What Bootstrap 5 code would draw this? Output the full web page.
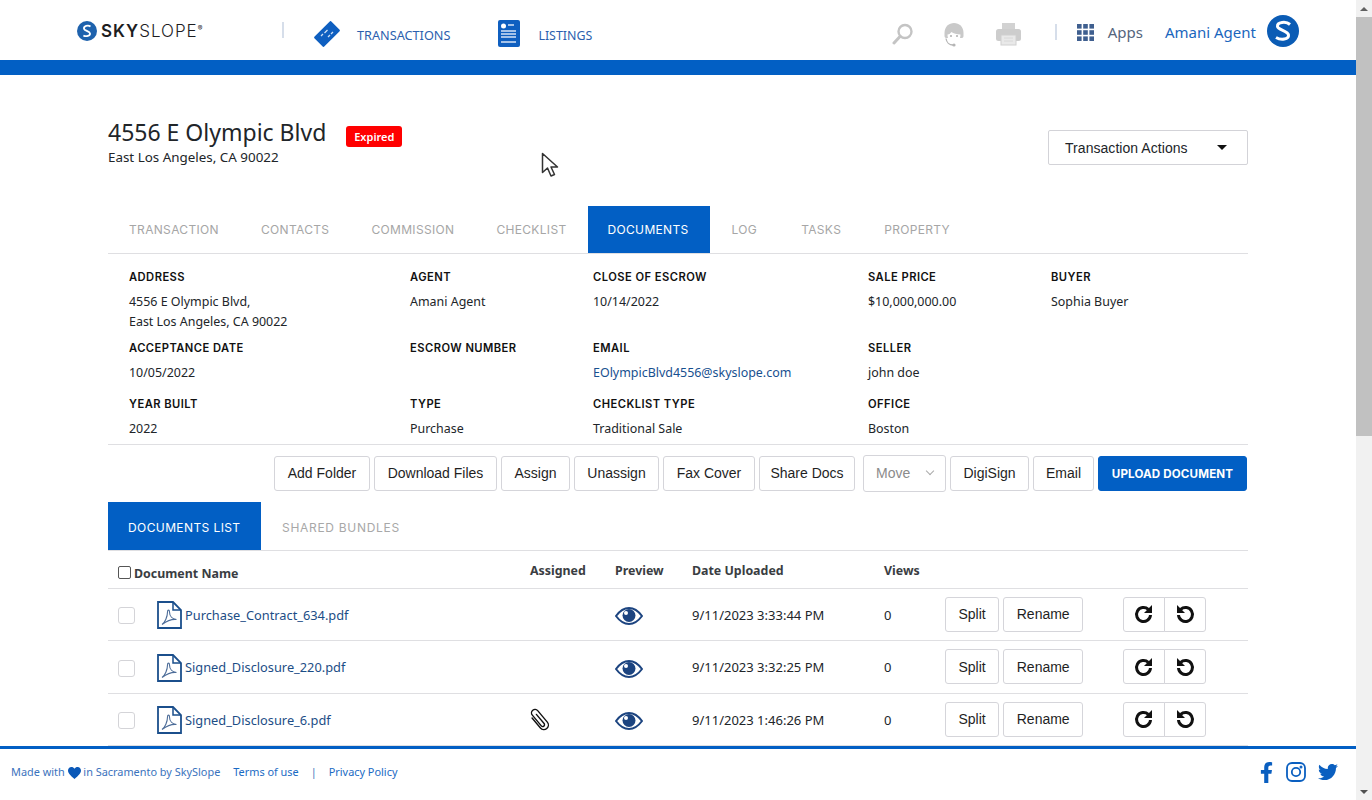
<!doctype html>
<html lang="en"><head><meta charset="utf-8"><title>SkySlope</title>
<link href="https://cdn.jsdelivr.net/npm/bootstrap@5.3.0/dist/css/bootstrap.min.css" rel="stylesheet">
<style>
:root{--sky:#025fc4;--ink:#212529;--line:#dfdfe2;}
html,body{height:100%;overflow:hidden;}
body{font-family:"Noto Sans","Open Sans",sans-serif;font-size:13px;color:var(--ink);background:#fff;}
.app{height:800px;}
.page{width:1356px;height:800px;}
.sb{width:16px;background:#f1f1f1;}
.sb-btn{height:17px;}
.sb-thumb{height:419px;background:#c1c1c1;}
.sb-arrow{width:0;height:0;border-left:4px solid transparent;border-right:4px solid transparent;}
.sb-arrow.up{border-bottom:4px solid #606060;}
.sb-arrow.down{border-top:4px solid #505050;}
.top{height:60px;padding-left:77px;padding-right:57px;}
.band{height:15px;background:var(--sky);}
.logo{width:205px;padding-top:1px;}
.logo-t{font-family:"Inter",sans-serif;font-size:17px;letter-spacing:1px;line-height:1;color:#1d1d1f;padding-top:2px;}
.logo-t b{font-weight:600;}.logo-t span{font-weight:300;}
.logo-t sup{font-size:7px;top:-.9em;letter-spacing:0;}
.vsep{width:2px;height:16px;background:#d6deea;}
.nav-main{font-size:12.7px;color:#2c5fae;text-decoration:none;padding-top:7px;}
.nav-main span{padding-top:5px;}
.nav-tr{margin-left:30px;}
.nav-tr svg{margin-right:17px;}
.nav-li{margin-left:46px;}
.nav-li svg{margin-right:17px;}
.nav-li span{font-size:12.4px;}
.tools{padding-top:4px;}
.ms-head{margin-left:29px;}
.ms-print{margin-left:31px;}
.ms-sep{margin-left:34px;}
.ms-grid{margin-left:20px;}
.apps{margin-left:14px;font-size:15px;color:#55657d;}
.who{margin-left:22px;font-size:15px;color:#1a66bd;}
.ava{margin-left:11px;margin-top:-3px;}
.pg{width:1140px;}
.head{height:131px;padding-top:43px;}
.title{font-size:23px;font-weight:400;line-height:28px;margin:0;}
.sub{font-size:13.4px;line-height:21px;}
.badge-exp{background:#f00;color:#fff;font-size:11px;font-weight:600;width:56px;height:21px;border-radius:3px;margin-left:20px;margin-top:8px;padding-top:1px;}
.btn-act{width:200px;height:35px;border:1px solid #d3d3d8;border-radius:2px;font:14px "Liberation Sans",sans-serif;letter-spacing:.05px;background:#fff;color:var(--ink);padding:0 20px 0 16px;margin-top:12px;}
.caret{width:0;height:0;border-left:5px solid transparent;border-right:5px solid transparent;border-top:5px solid #111;}
.tabs{height:48px;border-bottom:1px solid var(--line);font-family:"Inter",sans-serif;font-size:12px;}
.tabs a{display:flex;align-items:center;padding:0 21px;color:#a6a6a6;text-decoration:none;letter-spacing:.33px;white-space:nowrap;}
.tabs a.on{background:var(--sky);color:#fff;padding:0 21px 0 20px;}
.tabs a.t-log{padding:0 23px 0 22px;}
.tabs a.t-tasks{padding-right:22px;}
.info{display:grid;grid-template-columns:281px 183px 275px 183px 1fr;padding:13px 0 0 21px;height:191px;border-bottom:1px solid var(--line);align-content:start;font-size:12.45px;}
.lab{font-family:"Inter",sans-serif;font-size:11.2px;font-weight:600;color:#111;height:25px;line-height:20px;letter-spacing:.45px;white-space:nowrap;}
.val{line-height:20px;white-space:nowrap;}
.c1{height:46px}.c2{height:31px}.c3{height:31px}
.info a{color:#17508f;text-decoration:none;}
.bar{height:57px;padding-top:11px;padding-right:1px;}
.b{height:35px;background:#fff;border:1px solid #d5d5da;border-radius:3px;font:14px/1 "Liberation Sans",sans-serif;color:#1f1f1f;padding:0 0 2px;white-space:nowrap;}
.w-add{width:96px}.w-dl{width:123px}.w-as{width:69px}.w-un{width:85px}.w-fax{width:92px}.w-sh{width:96px}.w-dg{width:79px}.w-em{width:61px}
.b.mv{color:#8b8b8b;width:83px;padding:0 12px 2px;margin-left:4px;margin-top:-1px;height:37px;}
.b.up{background:var(--sky);border-color:var(--sky);color:#fff;font:700 11.6px "Inter",sans-serif;letter-spacing:.15px;width:149px;padding:0;}
.chev{width:6px;height:6px;border-right:1px solid #aaa;border-bottom:1px solid #aaa;transform:rotate(45deg);margin-top:-3px;}
.subtabs{height:49px;border-bottom:1px solid var(--line);font-family:"Inter",sans-serif;font-size:12px;}
.subtabs a{display:flex;align-items:center;padding:3px 21px 0;color:#a8a8a8;text-decoration:none;letter-spacing:.7px;}
.subtabs a.on{background:var(--sky);color:#fff;padding:3px 0 0 20px;width:153px;letter-spacing:.4px;}
.tbl{table-layout:fixed;width:1140px;margin:0;--bs-table-border-color:#dfdfe2;}
.tbl th,.tbl td{padding:0;vertical-align:middle;font-weight:400;}
.tbl th{font-weight:700;font-size:12.4px;color:#3a3d42;height:37px;padding-top:5px;}
.tbl th.first{padding-top:11px;}
.tbl td{height:52.6px;font-size:13px;padding-top:2px;}
.tbl td.act{padding-top:0;}
.ck-h.form-check-input{width:13px;height:13px;margin:0 3px 0 10px;border:1px solid #555;border-radius:2px;vertical-align:-1px;}
.ck.form-check-input{width:17px;height:17px;margin:1px 0 0 10px;border:1px solid #d4d4d8;border-radius:3px;}
.fname{color:#1c4d86;text-decoration:none;font-size:12.8px;}
.pdf{margin-left:22px;margin-right:3px;flex:none;}
.b.sm{height:35px;font-size:14px;padding:0 12.5px;}
.rot{width:42px;height:35px;padding:0;background:#fff;border:1px solid #d5d5da;}
.rot:first-child{border-radius:3px 0 0 3px;}
.rot:last-child{border-radius:0 3px 3px 0;margin-left:-1px;}
.clip{display:block;margin-left:-3px;}
.foot{left:0;right:0;bottom:0;height:54px;background:#fff;border-top:3px solid var(--sky);padding:0 18px 5px 11px;font-size:10.9px;color:#3b73bd;}
.foot a{color:#1a6ac4;text-decoration:none;}
.ft-a{margin-left:13px;}
.ft-s{margin:0 12px;}
.cursor{left:541px;top:152px;}
</style></head>
<body>
<div class="app d-flex">
<div class="page position-relative overflow-hidden flex-shrink-0">
  <header class="top d-flex align-items-center">
    <div class="logo d-flex align-items-center gap-1">
      <svg width="20" height="20" viewBox="0 0 20 20"><circle cx="10" cy="10" r="10" fill="#1e62ad"/><path d="M13.500 5.500C11 3.800 6.500 5 7 7.800c.4 2 5.600 2.200 6 4.600.4 2.600-4 3.600-6.600 2" fill="none" stroke="#fff" stroke-width="1.800"/></svg>
      <div class="logo-t"><b>SKY</b><span>SLOPE</span><sup>®</sup></div>
    </div>
    <div class="vsep"></div>
    <a class="nav-main nav-tr d-flex align-items-center" href="#">
      <svg width="26" height="26" viewBox="0 0 26 26"><rect x="1" y="6" width="24" height="14" rx="1.500" fill="#0f5fc0" transform="rotate(-45 13 13)"/><path d="M7 15l2-2M10.500 12l3-3M14 16l2-2M17 13l2-2" stroke="#cfe0f5" stroke-width="1.300"/></svg>
      <span>TRANSACTIONS</span>
    </a>
    <a class="nav-main nav-li d-flex align-items-center" href="#">
      <svg width="25" height="28" viewBox="0 0 25 28"><rect x="2" y="0" width="22" height="27" rx="2" fill="#0f5fc0"/><circle cx="7.500" cy="6" r="2.500" fill="#fff"/><path d="M12 5h6M5 11h15M5 14h15M5 17h15M5 22h15" stroke="#d6e4f6" stroke-width="1.400"/></svg>
      <span>LISTINGS</span>
    </a>
    <div class="tools ms-auto d-flex align-items-center">
      <svg width="22" height="24" viewBox="0 0 22 24" class="mt-1"><circle cx="13" cy="9.500" r="6.500" fill="none" stroke="#c4c4c4" stroke-width="2.400"/><path d="M8 14.500l-6 6.500" stroke="#c4c4c4" stroke-width="3" stroke-linecap="round"/></svg>
      <svg class="ms-head mt-1" width="22" height="25" viewBox="0 0 22 25"><path d="M1.500 11C1.500 4.500 6 1 11 1s9.500 3.500 9.500 10v3c0 1.500-1 2-2 2H3.500c-1 0-2-.5-2-2z" fill="#c9c9c9"/><path d="M4.500 12.500c2 0 3-1.500 4-2.500 2 1.500 5 2.500 9 2.500 0 4.500-2.500 8-6.500 8s-6.500-3.500-6.500-8z" fill="#fff"/><circle cx="8" cy="14" r="1.100" fill="#b5b5b5"/><circle cx="14" cy="14" r="1.100" fill="#b5b5b5"/><path d="M3 16.500c.5 4 3.500 6.500 7 6.500" stroke="#b5b5b5" fill="none" stroke-width="1.300"/><circle cx="11" cy="23" r="1.600" fill="#b5b5b5"/></svg>
      <svg class="ms-print mt-1" width="25" height="24" viewBox="0 0 25 24"><path d="M6 1h13v6H6z" fill="#d2d2d2"/><rect x="0" y="7" width="25" height="12" rx="2.500" fill="#cdcdcd"/><rect x="5" y="13" width="15" height="10" fill="#e9e9e9" stroke="#d0d0d0"/><path d="M8 16h9M8 19h9" stroke="#d8d8d8"/></svg>
      <div class="vsep ms-sep"></div>
      <svg class="ms-grid" width="17" height="17" viewBox="0 0 17 17"><g fill="#3f5f8f"><rect width="4.600" height="4.600"/><rect x="6.200" width="4.600" height="4.600"/><rect x="12.400" width="4.600" height="4.600"/><rect y="6.200" width="4.600" height="4.600"/><rect x="6.200" y="6.200" width="4.600" height="4.600"/><rect x="12.400" y="6.200" width="4.600" height="4.600"/><rect y="12.400" width="4.600" height="4.600"/><rect x="6.200" y="12.400" width="4.600" height="4.600"/><rect x="12.400" y="12.400" width="4.600" height="4.600"/></g></svg>
      <span class="apps">Apps</span>
      <span class="who">Amani Agent</span>
      <svg class="ava" width="32" height="32" viewBox="0 0 32 32"><circle cx="16" cy="16" r="16" fill="#0b5cb5"/><path d="M23 9.500C19 6 10 7 10.500 11.500c.4 3.500 10.500 4.500 11 8.500.5 4.500-7.500 5.500-12.500 2.500" fill="none" stroke="#fff" stroke-width="3"/></svg>
    </div>
  </header>
  <div class="band"></div>
  <main class="pg mx-auto">
    <div class="head d-flex justify-content-between align-items-start">
      <div>
        <div class="d-flex align-items-start">
          <h1 class="title">4556 E Olympic Blvd</h1>
          <span class="badge-exp d-inline-flex align-items-center justify-content-center">Expired</span>
        </div>
        <div class="sub">East Los Angeles, CA 90022</div>
      </div>
      <button class="btn-act d-flex align-items-center justify-content-between"><span>Transaction Actions</span><i class="caret"></i></button>
    </div>
    <nav class="tabs d-flex">
      <a href="#">TRANSACTION</a><a href="#">CONTACTS</a><a href="#">COMMISSION</a><a href="#">CHECKLIST</a><a href="#" class="on">DOCUMENTS</a><a href="#" class="t-log">LOG</a><a href="#" class="t-tasks">TASKS</a><a href="#">PROPERTY</a>
    </nav>
    <section class="info">
      <div class="lab">ADDRESS</div><div class="lab">AGENT</div><div class="lab">CLOSE OF ESCROW</div><div class="lab">SALE PRICE</div><div class="lab">BUYER</div>
      <div class="val c1">4556 E Olympic Blvd,<br>East Los Angeles, CA 90022</div><div class="val c1">Amani Agent</div><div class="val c1">10/14/2022</div><div class="val c1">$10,000,000.00</div><div class="val c1">Sophia Buyer</div>
      <div class="lab">ACCEPTANCE DATE</div><div class="lab">ESCROW NUMBER</div><div class="lab">EMAIL</div><div class="lab">SELLER</div><div class="lab"></div>
      <div class="val c2">10/05/2022</div><div class="val c2"></div><div class="val c2"><a href="#">EOlympicBlvd4556@skyslope.com</a></div><div class="val c2">john doe</div><div class="val c2"></div>
      <div class="lab">YEAR BUILT</div><div class="lab">TYPE</div><div class="lab">CHECKLIST TYPE</div><div class="lab">OFFICE</div><div class="lab"></div>
      <div class="val">2022</div><div class="val">Purchase</div><div class="val">Traditional Sale</div><div class="val">Boston</div><div class="val"></div>
    </section>
    <div class="bar d-flex justify-content-end align-items-start gap-1">
      <button class="b w-add">Add Folder</button><button class="b w-dl">Download Files</button><button class="b w-as">Assign</button><button class="b w-un">Unassign</button><button class="b w-fax">Fax Cover</button><button class="b w-sh">Share Docs</button>
      <button class="b mv d-flex align-items-center justify-content-between"><span>Move</span><i class="chev"></i></button>
      <button class="b w-dg">DigiSign</button><button class="b w-em">Email</button><button class="b up">UPLOAD DOCUMENT</button>
    </div>
    <nav class="subtabs d-flex"><a href="#" class="on">DOCUMENTS LIST</a><a href="#">SHARED BUNDLES</a></nav>
    <table class="table tbl">
      <colgroup><col style="width:422px"><col style="width:85px"><col style="width:77px"><col style="width:192px"><col style="width:61px"><col style="width:178px"><col></colgroup>
      <thead><tr><th class="first"><input class="form-check-input ck-h" type="checkbox" aria-label="All">Document Name</th><th>Assigned</th><th>Preview</th><th>Date Uploaded</th><th>Views</th><th></th><th></th></tr></thead>
      <tbody id="rows"></tbody>
    </table>
  </main>
  <svg class="cursor position-absolute" width="18" height="26" viewBox="0 0 18 26"><path d="M1.500 1.500v19l5-4.500 3.500 8 3.500-1.500-3.500-7.500h6.500z" fill="#fff" stroke="#333" stroke-width="1.500" stroke-linejoin="round"/></svg>
  <footer class="foot position-absolute d-flex align-items-center justify-content-between">
    <div class="d-flex align-items-center">
      <span>Made with <svg width="13" height="12" viewBox="0 0 24 22"><path d="M12 22C5 16 0 12 0 6.500 0 3 2.800 0 6.300 0 8.600 0 10.800 1.200 12 3.200 13.200 1.200 15.400 0 17.700 0 21.200 0 24 3 24 6.500 24 12 19 16 12 22z" fill="#0a58b8"/></svg> in Sacramento by SkySlope</span>
      <a class="ft-a" href="#">Terms of use</a><span class="ft-s">|</span><a href="#">Privacy Policy</a>
    </div>
    <div class="d-flex align-items-center" style="gap:12px">
      <svg width="15" height="21" viewBox="0 0 320 512"><path fill="#0a5fc0" d="M279.140 288l14.220-92.660h-88.910v-60.130c0-25.350 12.420-50.060 52.240-50.060h40.420V6.260S260.430 0 225.360 0c-73.220 0-121.080 44.380-121.080 124.720v70.620H22.890V288h81.390v224h100.170V288z"/></svg>
      <svg width="20" height="20" viewBox="0 0 20 20" fill="none" stroke="#0a5fc0" stroke-width="1.800"><rect x="1" y="1" width="18" height="18" rx="5"/><circle cx="10" cy="10" r="4.200"/><circle cx="15" cy="5" r=".6" fill="#0a5fc0"/></svg>
      <svg width="20" height="20" viewBox="0 0 512 512"><path fill="#0a5fc0" d="M459.370 151.716c.325 4.548.325 9.097.325 13.645 0 138.720-105.583 298.558-298.558 298.558-59.452 0-114.680-17.219-161.137-47.106 8.447.974 16.568 1.299 25.340 1.299 49.055 0 94.213-16.568 130.274-44.832-46.132-.975-84.792-31.188-98.112-72.772 6.498.974 12.995 1.624 19.818 1.624 9.421 0 18.843-1.300 27.614-3.573-48.081-9.747-84.143-51.980-84.143-102.985v-1.299c13.969 7.797 30.214 12.670 47.431 13.319-28.264-18.843-46.781-51.005-46.781-87.391 0-19.492 5.197-37.360 14.294-52.954 51.655 63.675 129.300 105.258 216.365 109.807-1.624-7.797-2.599-15.918-2.599-24.040 0-57.828 46.782-104.934 104.934-104.934 30.213 0 57.502 12.670 76.670 33.137 23.715-4.548 46.456-13.320 66.599-25.340-7.798 24.366-24.366 44.833-46.132 57.827 21.117-2.273 41.584-8.122 60.426-16.243-14.292 20.791-32.161 39.308-52.628 54.253z"/></svg>
    </div>
  </footer>
</div>
<div class="sb d-flex flex-column flex-shrink-0">
  <div class="sb-btn d-flex align-items-center justify-content-center"><i class="sb-arrow up"></i></div>
  <div class="sb-thumb"></div>
  <div class="flex-grow-1"></div>
  <div class="sb-btn d-flex align-items-center justify-content-center"><i class="sb-arrow down"></i></div>
</div>
</div>
<script>
const pdf='<svg class="pdf" width="25" height="28" viewBox="0 0 25 28"><path d="M1 1h15l8 8v18H1z" fill="#fff" stroke="#1b4f8c" stroke-width="1.800"/><path d="M16 1v8h8" fill="none" stroke="#1b4f8c" stroke-width="1.500"/><path d="M5 23.500c3-2 5.500-8 5.500-12.500 0-2.500 2-2.500 2 0 0 4 3 7 7 7.500-4-.5-9 1-14.500 5z" fill="none" stroke="#4c6c98" stroke-width="1.100"/></svg>';
const clip='<svg class="clip" width="24" height="26" viewBox="0 0 24 26"><g transform="rotate(-40 12 13)"><path d="M8 7v13a4.500 4.500 0 0 0 9 0V5a3.500 3.500 0 0 0-7 0v14a1.800 1.800 0 0 0 3.600 0V7" fill="none" stroke="#111" stroke-width="1.400" stroke-linecap="round"/></g></svg>';
const eye='<svg width="28" height="18" viewBox="0 0 28 18"><path d="M1 9C5 3.500 9 1 14 1s9 2.500 13 8c-4 5.500-8 8-13 8S5 14.500 1 9z" fill="#fff" stroke="#1c4480" stroke-width="2"/><circle cx="14" cy="8.500" r="6.500" fill="#1c4480"/><circle cx="11" cy="6" r="2" fill="#fff"/></svg>';
const cw='<svg width="20" height="20" viewBox="0 0 20 20"><path d="M16.500 11a7 7 0 1 1-2.200-5.600" fill="none" stroke="#111" stroke-width="3"/><path d="M18 1v8h-8z" fill="#111"/></svg>';
const ccw='<svg width="20" height="20" viewBox="0 0 20 20"><path d="M3.500 11a7 7 0 1 0 2.200-5.600" fill="none" stroke="#111" stroke-width="3"/><path d="M2 1v8h8z" fill="#111"/></svg>';
const data=[['Purchase_Contract_634.pdf','','9/11/2023 3:33:44 PM'],['Signed_Disclosure_220.pdf','','9/11/2023 3:32:25 PM'],['Signed_Disclosure_6.pdf',clip,'9/11/2023 1:46:26 PM']];
document.getElementById('rows').innerHTML=data.map(d=>`<tr><td><div class="d-flex align-items-center"><input class="form-check-input ck" type="checkbox" aria-label="Select"><span class="d-flex">${pdf}</span><a class="fname" href="#">${d[0]}</a></div></td><td>${d[1]}</td><td>${eye}</td><td>${d[2]}</td><td>0</td><td class="act"><div class="d-flex gap-1"><button class="b sm">Split</button><button class="b sm">Rename</button></div></td><td class="act"><div class="d-flex"><button class="rot d-flex align-items-center justify-content-center">${cw}</button><button class="rot d-flex align-items-center justify-content-center">${ccw}</button></div></td></tr>`).join('');
</script>
<script src="https://cdn.jsdelivr.net/npm/bootstrap@5.3.0/dist/js/bootstrap.bundle.min.js"></script>
</body></html>
